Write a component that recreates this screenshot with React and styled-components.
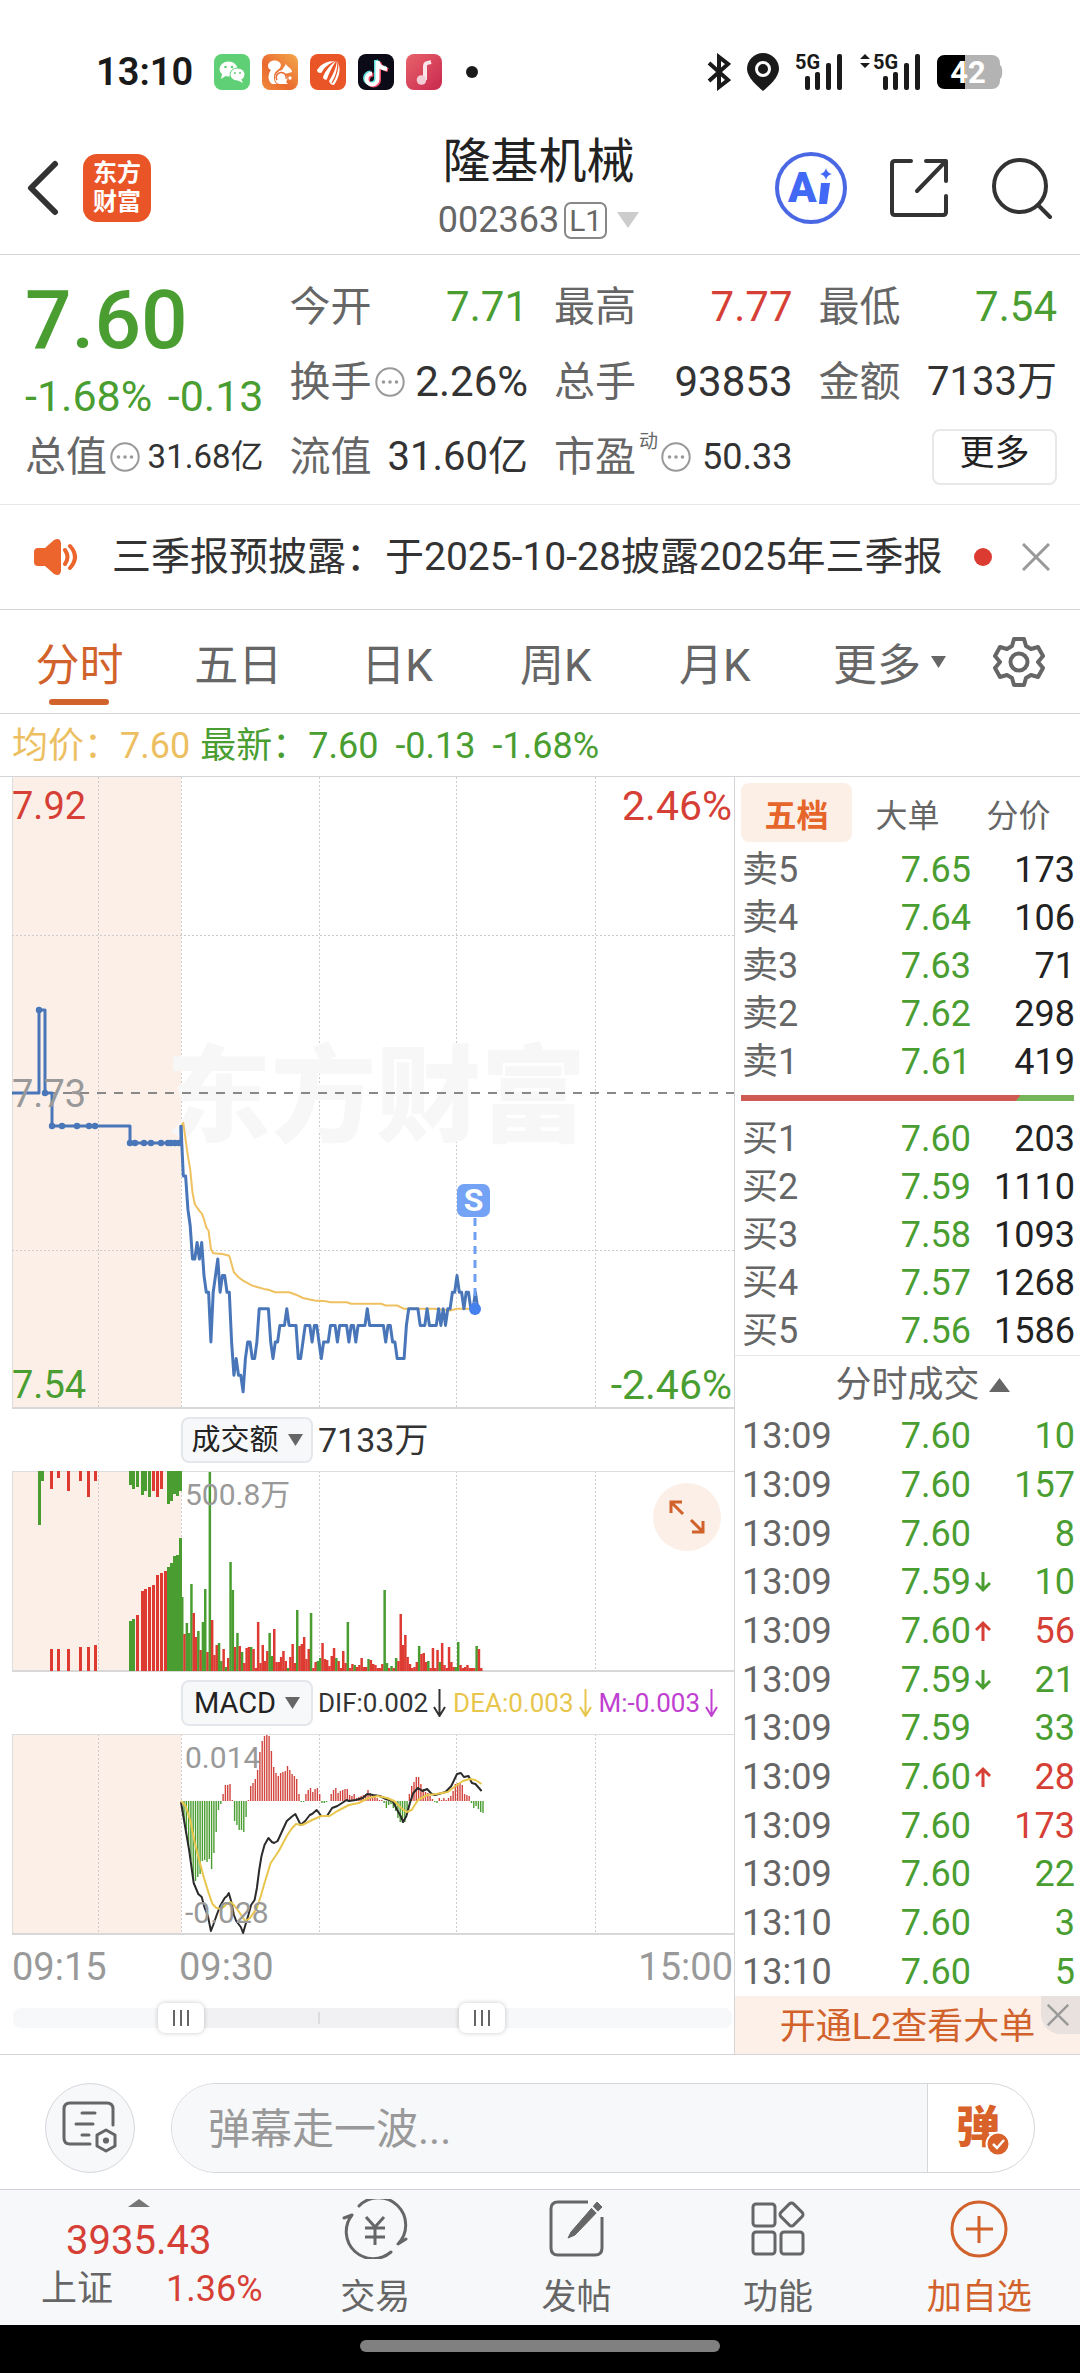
import React, { useState } from 'react'
import styled, { createGlobalStyle } from 'styled-components'

const GREEN = '#4a9e31';
const RED = '#d63f36';
const ORANGE = '#d2622b';
const LINE = '#d3d4d7';

const GlobalStyle = createGlobalStyle`
  * {
    box-sizing: border-box;
  }
  body {
    margin: 0;
    background: #fff;
    color: #333;
    font-family: Roboto, "Noto Sans CJK SC", sans-serif;
  }
  button, input {
    font-family: inherit;
    color: inherit;
    margin: 0;
  }
  svg {
    display: block;
    flex: none;
  }
`;

const Page = styled.div`
  width: 100%;
  overflow: hidden;
`;

const PlainButton = styled.button`
  border: none;
  background: none;
  padding: 0;
  display: flex;
  align-items: center;
  justify-content: center;
  cursor: pointer;
`;

/* status bar */

const StatusBar = styled.div`
  height: 96px;
  padding: 48px 77px 0 96px;
  display: flex;
  align-items: center;
  justify-content: space-between;
`;

const StatusGroup = styled.div`
  display: flex;
  align-items: center;
  gap: ${props => props.$gap}px;
`;

const Clock = styled.time`
  width: 106px;
  font-size: 38px;
  line-height: 40px;
  font-weight: 600;
  color: #1a1a1a;
`;

/* header */

const Header = styled.header`
  height: 159px;
  padding: 0 27px 0 24px;
  border-bottom: 1px solid ${LINE};
  display: grid;
  grid-template-columns: 1fr auto 1fr;
  align-items: center;
`;

const HeaderSide = styled.div`
  display: flex;
  align-items: center;
  justify-content: ${props => props.$end ? 'flex-end' : 'flex-start'};
  gap: ${props => props.$gap}px;
  padding-top: 26px;
`;

const Logo = styled.div`
  width: 68px;
  height: 68px;
  border-radius: 14px;
  background: #ea5527;
  color: #fff;
  font-size: 24px;
  line-height: 29px;
  font-weight: 700;
  text-align: center;
  padding: 5px 8px;
`;

const TitleBlock = styled.div`
  display: flex;
  flex-direction: column;
  align-items: center;
  padding-top: 28px;
`;

const Title = styled.h1`
  margin: 0;
  font-size: 48px;
  line-height: 62px;
  font-weight: 400;
  color: #222;
`;

const Code = styled.button`
  border: none;
  background: none;
  padding: 0;
  display: flex;
  align-items: center;
  gap: 5px;
  font-size: 36px;
  line-height: 54px;
  color: #666;
`;

const Level = styled.span`
  border: 2px solid #888;
  border-radius: 7px;
  padding: 0 3px;
  font-size: 30px;
  line-height: 33px;
  margin-right: 5px;
`;

/* quote */

const Quote = styled.section`
  display: grid;
  grid-template-columns: repeat(4, minmax(0, 1fr));
  grid-auto-rows: 75px;
  column-gap: 26px;
  padding: 14px 23px 10px 25px;
  border-bottom: 1px solid #e6e7ea;
`;

const BigPrice = styled.div`
  font-size: 82px;
  line-height: 102px;
  font-weight: 500;
  color: ${GREEN};
`;

const PriceBlock = styled.div`
  grid-row: span 2;
  display: flex;
  flex-direction: column;
`;

const PriceChange = styled.div`
  display: flex;
  justify-content: space-between;
  font-size: 43px;
  line-height: 50px;
  color: ${GREEN};
`;

const Stat = styled.div`
  display: flex;
  align-items: center;
  justify-content: space-between;
  white-space: nowrap;
`;

const StatLabel = styled.span`
  display: flex;
  align-items: center;
  gap: 3px;
  font-size: 41px;
  line-height: 50px;
  color: #666;
`;

const Sup = styled.sup`
  font-size: 19px;
  line-height: 20px;
  align-self: flex-start;
`;

const StatValue = styled.span`
  font-size: ${props => props.$size || 42}px;
  line-height: 50px;
  color: ${props => props.$color || '#333'};
`;

const MoreButton = styled.button`
  justify-self: end;
  align-self: center;
  width: 125px;
  height: 56px;
  border: 2px solid #e6e8ea;
  border-radius: 8px;
  background: #fff;
  padding: 0 0 5px;
  font-size: 35px;
  line-height: 46px;
  color: #222;
`;

/* notice */

const Notice = styled.section`
  height: 105px;
  padding: 0 30px 0 34px;
  display: flex;
  align-items: center;
  border-bottom: 1px solid ${LINE};
`;

const NoticeText = styled.a`
  flex: 1;
  margin-left: 34px;
  font-size: 39px;
  line-height: 50px;
  color: #333;
  text-decoration: none;
  white-space: nowrap;
`;

const Dot = styled.span`
  width: 18px;
  height: 18px;
  border-radius: 50%;
  background: #dc3b31;
  margin-right: 30px;
`;

/* tabs */

const PeriodTabs = styled.nav`
  height: 104px;
  display: grid;
  grid-template-columns: repeat(5, 5fr) 6fr 3fr;
  border-bottom: 1px solid ${LINE};
`;

const PeriodTab = styled.button`
  position: relative;
  border: none;
  background: none;
  padding: 0;
  display: flex;
  align-items: center;
  justify-content: center;
  gap: 10px;
  font-size: 44px;
  color: ${props => props.$active ? ORANGE : '#666'};

  &::after {
    content: '';
    display: ${props => props.$active ? 'block' : 'none'};
    position: absolute;
    bottom: 8px;
    width: 60px;
    height: 6px;
    border-radius: 3px;
    background: ${ORANGE};
  }
`;

const SettingsButton = styled(PlainButton)`
  justify-content: flex-start;
  padding-left: 8px;
`;

const InfoRow = styled.div`
  height: 63px;
  padding: 2px 12px 0;
  display: flex;
  align-items: center;
  font-size: 36px;
  line-height: 50px;
  border-bottom: 1px solid ${LINE};
  color: ${GREEN};
  white-space: nowrap;
`;

const InfoItem = styled.span`
  margin-right: ${props => props.$gap || 0}px;
  color: ${props => props.$color || GREEN};
`;

/* body */

const Body = styled.main`
  display: grid;
  grid-template-columns: minmax(0, 1fr) 346px;
  border-bottom: 1px solid ${LINE};
`;

const Charts = styled.div`
  padding-left: 12px;
  display: flex;
  flex-direction: column;
`;

const ChartBox = styled.div`
  position: relative;

  > svg {
    width: 100%;
    height: auto;
  }
`;

const corners = {
  tl: 'top: 7px; left: 0;',
  tr: 'top: 7px; right: 2px;',
  ml: 'top: 295px; left: 0;',
  bl: 'bottom: 2px; left: 0;',
  br: 'bottom: 2px; right: 2px;',
  open: 'top: 2px; left: 173px;',
  openLow: 'bottom: 0; left: 173px;',
};

const AxisLabel = styled.span`
  position: absolute;
  ${props => corners[props.$at]}
  font-size: ${props => props.$size || 38}px;
  line-height: 44px;
  color: ${props => props.$color || '#999'};
`;

const ExpandButton = styled(PlainButton)`
  position: absolute;
  top: 12px;
  right: 13px;
  width: 68px;
  height: 68px;
  border-radius: 50%;
  background: #fcefe7;
`;

const IndicatorBar = styled.div`
  height: 62px;
  padding-left: 169px;
  display: flex;
  align-items: center;
  gap: 5px;
  white-space: nowrap;
`;

const IndicatorButton = styled.button`
  width: 132px;
  height: 46px;
  border: 2px solid #e3e7eb;
  border-radius: 8px;
  background: #f7f8fa;
  padding: 0;
  display: flex;
  align-items: center;
  justify-content: center;
  gap: 9px;
  font-size: 29px;
  line-height: 40px;
  color: #222;
`;

const IndicatorValue = styled.span`
  font-size: 34px;
  line-height: 44px;
  color: #333;
`;

const MacdValue = styled.span`
  display: flex;
  align-items: center;
  gap: 5px;
  margin-right: 2px;
  font-size: 26px;
  line-height: 44px;
  color: ${props => props.$color};
`;

const TimeAxis = styled.div`
  height: 60px;
  padding: 3px 1px 0 0;
  display: grid;
  grid-template-columns: 167px 1fr auto;
  align-items: center;
  font-size: 38px;
  line-height: 44px;
  color: #999;
`;

const RangeSlider = styled.div`
  position: relative;
  height: 30px;
  margin: 8px 2px 21px 1px;
`;

const RangeTrack = styled.div`
  position: absolute;
  top: 5px;
  left: 0;
  right: 0;
  height: 20px;
  border-radius: 8px;
  background: #f7f8fa;
  overflow: hidden;
`;

const RangeFill = styled.div`
  position: absolute;
  top: 0;
  bottom: 0;
  background: linear-gradient(#ddd, #ddd) 47% 50% / 2px 12px no-repeat #f1f1f3;
`;

const RangeInput = styled.input`
  position: absolute;
  inset: 0;
  width: 100%;
  height: 30px;
  background: none;
  appearance: none;
  pointer-events: none;

  &::-webkit-slider-thumb {
    appearance: none;
    pointer-events: auto;
    width: 46px;
    height: 30px;
    border-radius: 7px;
    background:
      linear-gradient(#666, #666) 15px 50% / 2px 16px no-repeat,
      linear-gradient(#666, #666) 22px 50% / 2px 16px no-repeat,
      linear-gradient(#666, #666) 29px 50% / 2px 16px no-repeat,
      #fff;
    box-shadow: 0 0 5px rgba(0, 0, 0, 0.22);
  }
`;

/* order book */

const Book = styled.aside`
  border-left: 1px solid ${LINE};
  display: flex;
  flex-direction: column;
`;

const BookTabs = styled.div`
  display: grid;
  grid-template-columns: repeat(3, 1fr);
  padding: 6px 6px 4px;
`;

const BookTab = styled.button`
  height: 59px;
  border: none;
  border-radius: 8px;
  padding: 0;
  background: ${props => props.$active ? '#fcefe6' : 'none'};
  color: ${props => props.$active ? '#e5652b' : '#666'};
  font-weight: ${props => props.$active ? 700 : 400};
  font-size: 32px;
`;

const Table = styled.table`
  width: 100%;
  height: ${props => props.$height}px;
  border-collapse: collapse;
  table-layout: fixed;
  font-size: 36px;
  line-height: 40px;
`;

const Cell = styled.td`
  padding: 0;
  text-align: ${props => props.$align || 'left'};
  color: ${props => props.$color || '#222'};
  white-space: nowrap;

  &:first-child {
    padding-left: 7px;
    width: 112px;
  }
  &:nth-child(2) {
    width: 124px;
  }
  &:last-child {
    padding-right: 5px;
  }
`;

const TickArrow = styled.span`
  position: absolute;
  margin: 8px 0 0 4px;
`;

const RatioBar = styled.div`
  height: 6px;
  margin: 9px 6px 14px;
  display: flex;
  background: #76b65b;
`;

const RatioFill = styled.div`
  background: #cf5a52;
  clip-path: polygon(0 0, 100% 0, calc(100% - 5px) 100%, 0 100%);
`;

const TicksHeader = styled.button`
  height: 57px;
  border: none;
  border-top: 1px solid #e6e7ea;
  background: none;
  padding: 2px 0 0 30px;
  display: flex;
  align-items: center;
  justify-content: center;
  gap: 9px;
  font-size: 36px;
  line-height: 46px;
  color: #666;
`;

const Promo = styled.div`
  position: relative;
  flex: 1;
  padding-top: 3px;
  background: #fcf0e8;
  display: flex;
  align-items: center;
  justify-content: center;
`;

const PromoLink = styled.a`
  font-size: 36px;
  line-height: 46px;
  color: ${ORANGE};
  text-decoration: none;
`;

const PromoClose = styled(PlainButton)`
  position: absolute;
  top: 0;
  right: 0;
  width: 39px;
  height: 38px;
  padding-right: 6px;
  border-bottom-left-radius: 20px;
  background: #e9e1dd;
`;

/* comment bar */

const CommentBar = styled.form`
  height: 134px;
  padding: 16px 45px 4px;
  display: flex;
  align-items: center;
  gap: 36px;
`;

const RoundButton = styled(PlainButton)`
  width: 90px;
  height: 90px;
  border: 1px solid #d5d7db;
  border-radius: 50%;
  background: #f7f8fa;
`;

const CommentField = styled.div`
  flex: 1;
  height: 90px;
  display: flex;
  border: 1px solid #d5d7db;
  border-radius: 45px;
  overflow: hidden;
`;

const CommentInput = styled.input`
  flex: 1;
  min-width: 0;
  border: none;
  outline: none;
  padding: 3px 36px 0;
  background: #f7f8fa;
  font-size: 42px;

  &::placeholder {
    color: #999;
    opacity: 1;
  }
`;

const DanmakuButton = styled(PlainButton)`
  width: 107px;
  border-left: 1px solid #d5d7db;
  padding-right: 6px;
`;

const DanmakuGlyph = styled.span`
  position: relative;
  font-size: 44px;
  line-height: 50px;
  font-weight: 900;
  color: #d9612a;

  svg {
    position: absolute;
    right: -11px;
    bottom: -4px;
  }
`;

/* bottom bar */

const BottomBar = styled.nav`
  height: 136px;
  background: #f7f8fa;
  border-top: 1px solid #d0d2d6;
  display: grid;
  grid-template-columns: 274fr repeat(4, 201fr);
`;

const IndexBlock = styled.button`
  border: none;
  background: none;
  padding: 9px 12px 0 41px;
  display: flex;
  flex-direction: column;
  align-items: stretch;
  color: ${RED};
  font-size: 40px;
  line-height: 49px;
`;

const IndexValue = styled.span`
  display: flex;
  flex-direction: column;
  align-items: center;
  gap: 9px;
  margin-right: 26px;
`;

const IndexMeta = styled.span`
  display: flex;
  justify-content: space-between;
  font-size: 36px;
`;

const IndexName = styled.span`
  color: #666;
`;

const NavButton = styled.button`
  border: none;
  background: none;
  padding: 9px 0 0;
  display: flex;
  flex-direction: column;
  align-items: center;
  gap: 14px;
  font-size: 35px;
  line-height: 50px;
  color: ${props => props.$accent ? ORANGE : '#666'};
`;

const HomeArea = styled.div`
  height: 48px;
  background: #000;
  display: flex;
  justify-content: center;
  align-items: center;
  padding-bottom: 6px;
`;

const HomeIndicator = styled.div`
  width: 33.3%;
  height: 12px;
  border-radius: 6px;
  background: #808080;
`;

/* data */

const PERIODS = ['分时', '五日', '日K', '周K', '月K'];

const ASKS = [
  ['卖5', '7.65', 173],
  ['卖4', '7.64', 106],
  ['卖3', '7.63', 71],
  ['卖2', '7.62', 298],
  ['卖1', '7.61', 419],
];

const BIDS = [
  ['买1', '7.60', 203],
  ['买2', '7.59', 1110],
  ['买3', '7.58', 1093],
  ['买4', '7.57', 1268],
  ['买5', '7.56', 1586],
];

const TICKS = [
  ['13:09', '7.60', '', 10, GREEN],
  ['13:09', '7.60', '', 157, GREEN],
  ['13:09', '7.60', '', 8, GREEN],
  ['13:09', '7.59', 'down', 10, GREEN],
  ['13:09', '7.60', 'up', 56, RED],
  ['13:09', '7.59', 'down', 21, GREEN],
  ['13:09', '7.59', '', 33, GREEN],
  ['13:09', '7.60', 'up', 28, RED],
  ['13:09', '7.60', '', 173, RED],
  ['13:09', '7.60', '', 22, GREEN],
  ['13:10', '7.60', '', 3, GREEN],
  ['13:10', '7.60', '', 5, GREEN],
];

// minute prices, in cents below the previous close
const PRICES = [
  2, 5, 5, 7, 8, 10, 10, 9, 10, 9, 11, 12, 12, 15, 12, 11, 10, 12, 11, 11,
  12, 12, 15, 17, 16, 17, 17, 18, 16, 15, 15, 16, 16, 15, 13, 13, 13, 13, 13, 15,
  16, 15, 15, 14, 14, 14, 13, 14, 14, 14, 14, 16, 16, 15, 14, 14, 14, 15, 14, 14,
  15, 16, 15, 15, 15, 14, 14, 14, 15, 14, 14, 14, 14, 15, 14, 14, 15, 14, 14, 14,
  14, 13, 14, 14, 14, 14, 14, 14, 14, 15, 14, 14, 15, 15, 16, 16, 16, 16, 14, 13,
  13, 13, 13, 13, 14, 14, 14, 13, 14, 14, 14, 14, 13, 14, 13, 14, 13, 13, 12, 12,
  11, 12, 12, 13, 12, 12, 13, 13, 12, 13, 13,
];

// [minute, cents below the previous close]
const AVERAGE = [
  [0, 2], [1, 1.8], [3, 3.8], [4, 4.6], [5, 6], [6, 6.7], [8, 7.1], [9, 7.25], [10, 7.6],
  [11, 8.1], [12, 8.3], [13, 9.4], [14, 9.65], [18, 9.7], [21, 9.8], [22, 10.3], [23, 10.8],
  [25, 11.1], [27, 11.3], [31, 11.6], [36, 11.8], [38, 11.85], [41, 12], [47, 12], [50, 12.15],
  [53, 12.35], [58, 12.5], [63, 12.55], [65, 12.6], [72, 12.6], [74, 12.7], [87, 12.7],
  [89, 12.8], [94, 12.8], [97, 13], [110, 13], [117, 13.1], [120, 13], [127, 13],
];

const AUCTION_DOTS = [
  [27, 233], [33, 316], [40, 349], [50, 349], [65, 349], [77, 349], [83, 349],
  [118, 366], [123, 366], [132, 366], [139, 366], [149, 366], [156, 366], [159, 366], [163, 366], [167, 366],
];

// positive bars are red, negative ones green
const VOLUMES = [
  -74, 37, -48, -38, -87, 58, 34, -40, 21, -49, -82, 19, -199, 51, 16, 26, -28, -10, 22, -4,
  13, -109, -81, 24, -38, 25, -19, 8, 23, 24, -24, 22, 3, 49, 8, 26, 10, 20, -38, -15,
  42, 9, 9, 14, 20, 10, -3, 14, 27, 8, -61, 25, 27, 34, 12, 22, -58, 3, 9, -10,
  -13, 28, 12, 11, 5, 15, 23, -13, 10, 3, 20, 8, -49, 3, 7, -6, 4, 6, 13, 4,
  4, -12, 11, 7, 6, 3, 3, 7, -81, -8, 3, -5, 3, -13, 10, 57, 26, 36, 14, 7,
  3, 4, 9, -25, 17, 18, 9, -10, 3, 23, 3, 21, -9, 28, 6, 3, 24, 9, 4, -4,
  -29, 6, 3, 4, 6, 3, 3, 3, -25, 22, 3,
];

// [x, height] of the call auction, matched and unmatched
const AUCTION_MATCHED = [
  [39, 22], [46, 22], [56, 22], [68, 24], [76, 24], [83, 26],
  [118, -50], [121, -52], [125, 56], [130, 80], [133, 82], [137, 84], [141, 86], [145, 96], [149, 98],
  [153, 100], [156, -104], [159, -108], [162, -115], [165, -116], [168, -133],
];
const AUCTION_UNMATCHED = [
  [27, -54], [30, -10], [39, 18], [46, 7], [56, 20], [68, 10], [76, 26], [83, 10],
  [118, -14], [121, -18], [125, -16], [130, -24], [133, -20], [137, -26], [141, 20], [145, 26], [149, 18],
  [156, -33], [159, -30], [162, -23], [165, -25], [168, -20],
];

const MACD = [
  0, -19, -29, -45, -59, -78, -80, -76, -73, -60, -59, -61, -58, -68, -52, -31, -9, -3, 7, 16,
  16, 17, 1, -20, -24, -29, -29, -31, -16, 1, 15, 18, 22, 31, 49, 60, 65, 66, 65, 50,
  34, 28, 25, 28, 29, 30, 35, 31, 27, 25, 22, 7, -1, -1, 7, 11, 13, 9, 12, 13,
  7, -2, -2, -1, 0, 7, 11, 13, 8, 10, 11, 12, 12, 6, 5, 7, 3, 4, 5, 6,
  7, 11, 8, 5, 5, 3, 1, 1, -2, -7, -4, -3, -7, -10, -17, -21, -22, -21, -12, 7,
  15, 19, 24, 24, 17, 12, 9, 8, 5, 2, -1, -2, 3, 1, 3, 1, 3, 5, 10, 17,
  18, 18, 16, 7, 6, 5, -2, -7, -5, -8, -11, -12,
];

const DIF = [
  [0, 68], [1, 82], [3.5, 116], [5.5, 149], [7.5, 160], [9, 163], [10.3, 174], [11.7, 182], [13, 197],
  [14, 191], [15.5, 181], [17, 172], [19, 164], [20, 162], [20.8, 159], [21.8, 167], [23, 181], [24, 187],
  [25, 190], [26, 193], [27, 199], [28, 191], [29.3, 181], [30.5, 171], [32, 166], [33, 154], [34, 136],
  [35, 122], [36.3, 111], [38, 104], [39.5, 108], [40.5, 109], [42, 107], [44, 97], [46, 87], [48, 83],
  [49.7, 80], [51, 86], [52, 91], [54, 87], [56, 81], [57, 80], [59, 76], [61, 82], [63.5, 82], [65.7, 74],
  [68, 72], [72, 66], [73, 67], [76, 66], [79, 64], [81, 60], [83.5, 61], [86.5, 62], [89, 65], [92, 67],
  [94, 76], [95.5, 82], [96.6, 88], [98, 82], [99.5, 69], [101, 59], [103, 54], [105, 57], [107, 55],
  [109, 60], [110.5, 61], [115, 58], [117.5, 52], [120, 40], [121.7, 39], [123, 43], [125, 42],
  [126.5, 49], [128, 50], [130.7, 57],
];

const DEA = [
  [0, 67], [2, 72], [4, 86], [6, 109], [8, 127], [10, 144], [12, 159], [13.7, 170], [15.4, 174],
  [17.4, 175], [19.5, 171], [21.5, 168], [23, 171], [25, 177], [27, 184], [28, 187], [30, 184], [33, 174],
  [34.7, 162], [36.3, 149], [39, 129], [42.5, 117], [46, 102], [48, 95], [50, 90], [52.7, 91], [57, 86],
  [61, 82], [64.6, 82], [68, 77], [73, 71], [77.3, 69], [81.4, 64], [85.5, 62], [89.6, 64], [92.7, 67],
  [95.8, 74], [98, 78], [100.3, 76], [103, 66], [107, 61], [111, 60], [116, 58], [119.4, 52],
  [122.5, 47], [125.5, 45], [128, 46], [130.7, 50],
];

const OPEN_X = 169;
const MINUTE = 2.3;
const minuteX = i => OPEN_X + i * MINUTE;
const priceY = cents => 316 + cents * 16.6;
const toPoints = list => list.map(([x, y]) => `${x.toFixed(1)},${y.toFixed(1)}`).join(' ');

/* icons */

const Triangle = ({ up, width, height, color }) => (
  <svg width={width} height={height} viewBox="0 0 10 10" preserveAspectRatio="none">
    <path d={up ? 'M0 10H10L5 0Z' : 'M0 0H10L5 10Z'} fill={color} />
  </svg>
);

const MoreDots = () => (
  <svg width="30" height="30" viewBox="0 0 30 30" fill="#999">
    <circle cx="15" cy="15" r="13.7" fill="none" stroke="#999" strokeWidth="2" />
    <circle cx="8.5" cy="15" r="1.8" />
    <circle cx="15" cy="15" r="1.8" />
    <circle cx="21.5" cy="15" r="1.8" />
  </svg>
);

const Close = ({ size, color = '#999', width = 3 }) => (
  <svg width={size} height={size} viewBox="0 0 28 28" stroke={color} strokeWidth={width}>
    <path d="M1 1L27 27M27 1L1 27" />
  </svg>
);

const Arrow = ({ up, color, width = 16, height = 24, stroke = 3 }) => (
  <svg width={width} height={height} viewBox="0 0 16 24" fill="none" stroke={color} strokeWidth={stroke}>
    <path d={up ? 'M8 22V5M1 11L8 4L15 11' : 'M8 2V19M1 13L8 20L15 13'} />
  </svg>
);

const LongArrow = ({ color }) => (
  <svg width="13" height="28" viewBox="0 0 13 28" fill="none" stroke={color} strokeWidth="2">
    <path d="M6.5 0V26M1 18L6.500 27L12 18" />
  </svg>
);

const AppIcons = () => (
  <svg width="266" height="38" viewBox="0 0 266 38">
    <defs>
      <linearGradient id="squirrel" x1="1" y1="0" x2="0" y2="1">
        <stop offset="0" stopColor="#f3a84c" />
        <stop offset="0.6" stopColor="#ea6a2f" />
        <stop offset="1" stopColor="#f08a3c" />
      </linearGradient>
      <linearGradient id="music" x1="0" y1="0" x2="1" y2="1">
        <stop offset="0" stopColor="#e8636a" />
        <stop offset="1" stopColor="#c9274f" />
      </linearGradient>
    </defs>
    <rect x="0" y="1" width="36" height="36" rx="8" fill="#5fd075" />
    <ellipse cx="14.500" cy="16" rx="9" ry="7.500" fill="#fff" />
    <path d="M8 21L7 26L13 22Z" fill="#fff" />
    <ellipse cx="23.500" cy="21.500" rx="7.500" ry="6.500" fill="#fff" stroke="#5fd075" strokeWidth="1" />
    <path d="M27 26L29 30L23 27Z" fill="#fff" />
    <g fill="#5fd075">
      <circle cx="11.500" cy="14" r="1.300" />
      <circle cx="18" cy="14" r="1.300" />
      <circle cx="21" cy="20" r="1" />
      <circle cx="26" cy="20" r="1" />
    </g>
    <rect x="48" y="1" width="36" height="36" rx="8" fill="url(#squirrel)" />
    <path d="M54 13C54 8 61 6 65 9C68 11 67 14 65 16C62 18 60 20 60 24C60 28 61 30 63 31H58C53 27 54 21 57 17C55 16 54 15 54 13Z" fill="#fff" />
    <path d="M72 11L68 17C64 18 61 21 61 25C61 29 63 31 67 31H74L72 29C74 27 74 23 71 21L78 19C78 15 73 14 72 11Z" fill="#fff" />
    <path d="M63 27A5 5 0 1 1 72 26" fill="none" stroke="#ea6a2f" strokeWidth="1.500" />
    <circle cx="76" cy="25" r="1.700" fill="#fff" />
    <rect x="96" y="1" width="36" height="36" rx="8" fill="#ea5527" />
    <g fill="#fff">
      <path d="M103 17C107 11 113 8 121 8C114 11 110 15 108 19C107 21 103 20 103 17Z" />
      <path d="M109 24C112 17 116 12 122 8C118 14 115 20 113 26C112 28 109 26 109 24Z" />
      <path d="M115 28C119 22 122 15 123 8C128 15 125 25 120 32C118 32 116 31 115 28Z" />
    </g>
    <path d="M124 9C124 17 122 24 118 30" fill="none" stroke="#ea5527" strokeWidth="1.200" />
    <rect x="144" y="1" width="36" height="36" rx="8" fill="#0b0b17" />
    <g fill="none" strokeWidth="4">
      <path d="M162 7V25A5.500 5.500 0 1 1 156.500 19.500M162 7C163 12 167 15 172 15" stroke="#5fe0e0" />
      <path d="M165 9V27A5.500 5.500 0 1 1 159.500 21.500M165 9C166 14 170 16 174 17" stroke="#ec5068" />
      <path d="M163.500 8V26A5.500 5.500 0 1 1 158 20.500M163.500 8C164 13 168 15.500 173 16" stroke="#fff" />
    </g>
    <rect x="192" y="1" width="36" height="36" rx="8" fill="url(#music)" />
    <path d="M211 27V13C211 10 213 10 217 9" fill="none" stroke="#f9e6ea" strokeWidth="4" />
    <circle cx="207.500" cy="27" r="4.800" fill="#f3cdd5" />
    <circle cx="258" cy="19" r="6" fill="#1a1a1a" />
  </svg>
);

const Bluetooth = () => (
  <svg width="24" height="38" viewBox="0 0 24 38" fill="none" stroke="#1a1a1a" strokeWidth="4">
    <path d="M2 10L21 27L12 34V4L21 11L2 28" />
  </svg>
);

const Pin = () => (
  <svg width="32" height="38" viewBox="0 0 32 38">
    <path d="M16 0A16 16 0 0 0 0 16C0 24 10 33 16 38C22 33 32 24 32 16A16 16 0 0 0 16 0Z" fill="#1a1a1a" />
    <circle cx="16" cy="16" r="6.500" fill="#1a1a1a" stroke="#fff" strokeWidth="3" />
  </svg>
);

const Signal = ({ active }) => (
  <svg width={active ? 62 : 48} height="48" viewBox={active ? '-14 -5 62 48' : '0 -5 48 48'} fill="#1a1a1a">
    {active && <path d="M-13 6L-8 1L-3 6ZM-13 10H-3L-8 15Z" />}
    <text x="0" y="16" fontSize="20" fontWeight="700">5G</text>
    <rect x="10" y="23" width="5" height="14" rx="2" />
    <rect x="20" y="19" width="5" height="18" rx="2" />
    <rect x="31" y="10" width="5" height="27" rx="2" />
    <rect x="42" y="1" width="5" height="36" rx="2" />
  </svg>
);

const Battery = () => (
  <svg width="66" height="36" viewBox="0 0 66 36">
    <rect x="0" y="1" width="63" height="34" rx="8" fill="#b3b3b3" />
    <path d="M63 11C66 12 66 24 63 25Z" fill="#b3b3b3" />
    <path d="M8 1H28V35H8C3 35 0 32 0 27V9C0 4 3 1 8 1Z" fill="#000" />
    <text x="31" y="29" textAnchor="middle" fontSize="31" fontWeight="700" fill="#fff">42</text>
  </svg>
);

const AiIcon = () => (
  <svg width="72" height="72" viewBox="0 0 72 72">
    <circle cx="36" cy="36" r="34" fill="none" stroke="#4a68e4" strokeWidth="4" />
    <text x="13" y="50" fontSize="42" fontWeight="900" fill="#4169f5">A</text>
    <path d="M46 31H55L52 52H44Z" fill="#4169f5" />
    <path d="M51 16Q52 21 57 22Q52 23 51 28Q50 23 45 22Q50 21 51 16Z" fill="#4169f5" />
  </svg>
);

const ShareIcon = () => (
  <svg width="60" height="60" viewBox="0 0 60 60" fill="none" stroke="#333" strokeWidth="4" strokeLinecap="round" strokeLinejoin="round">
    <path d="M22 3H6Q3 3 3 6V54Q3 57 6 57H54Q57 57 57 54V38" />
    <path d="M37 3H57V23M56 4L28 33" />
  </svg>
);

const SearchIcon = () => (
  <svg width="62" height="62" viewBox="0 0 62 62" fill="none" stroke="#333" strokeWidth="4" strokeLinecap="round">
    <circle cx="29" cy="29" r="26" />
    <path d="M47 48L59 60" />
  </svg>
);

const Speaker = () => (
  <svg width="44" height="36" viewBox="0 0 44 36">
    <path d="M0 13Q0 9 4 9H11L20 1Q26 -2 27 4V32Q26 38 20 35L11 27H4Q0 27 0 23Z" fill="#ec652d" />
    <path d="M31 11Q36 18 31 25M36 7Q46 18 36 29" fill="none" stroke="#ec652d" strokeWidth="4" strokeLinecap="round" />
  </svg>
);

const Gear = () => (
  <svg width="52" height="52" viewBox="0 0 52 52" fill="none" stroke="#666" strokeWidth="4" strokeLinejoin="round">
    <path d="M21 3H31L33 10L38 13L45 11L50 20L45 26L50 32L45 41L38 39L33 42L31 49H21L19 42L14 39L7 41L2 32L7 26L2 20L7 11L14 13L19 10Z" />
    <circle cx="26" cy="26" r="8.500" />
  </svg>
);

const Expand = () => (
  <svg width="36" height="34" viewBox="0 0 36 34" fill="none" stroke={ORANGE} strokeWidth="3">
    <path d="M2 13V2H13M2 2L14 14M34 21V32H23M34 32L22 20" />
  </svg>
);

const DanmakuSettings = () => (
  <svg width="56" height="54" viewBox="0 0 56 54" fill="none" stroke="#666" strokeWidth="3" strokeLinecap="round">
    <path d="M28 43H8Q2 43 2 37V8Q2 2 8 2H45Q51 2 51 8V24" />
    <path d="M20 12H33M14 23H31M20 34H27" />
    <path d="M44 29L53 34V45L44 50L35 45V34Z" strokeLinejoin="round" />
    <circle cx="44" cy="39.500" r="1.600" fill="#666" />
  </svg>
);

const CheckBadge = () => (
  <svg width="26" height="26" viewBox="0 0 26 26">
    <circle cx="13" cy="13" r="11.500" fill="#d9612a" stroke="#fff" strokeWidth="2" />
    <path d="M8 13L12 17L19 9" fill="none" stroke="#fff" strokeWidth="2.500" />
  </svg>
);

const TradeIcon = () => (
  <svg width="66" height="60" viewBox="0 0 66 60" fill="none" stroke="#666" strokeWidth="3" strokeLinecap="round" strokeLinejoin="round">
    <path d="M17 7A27 27 0 0 1 56 45L64 40" />
    <path d="M49 53A27 27 0 0 1 10 16L2 19" />
    <path d="M24 18L33 28L42 18M23 29H43M23 38H43M33 28V46" strokeLinecap="butt" />
  </svg>
);

const PostIcon = () => (
  <svg width="56" height="60" viewBox="0 0 56 60" fill="none" stroke="#666" strokeWidth="3">
    <path d="M39 3H9Q2 3 2 10V49Q2 56 9 56H46Q53 56 53 49V18" />
    <path d="M48 3L53 8L26 36L19 39L22 33Z" fill="#666" strokeWidth="1" />
    <path d="M42 7L49 14" stroke="#f7f8fa" strokeWidth="2" />
  </svg>
);

const FunctionIcon = () => (
  <svg width="54" height="60" viewBox="0 0 54 60" fill="none" stroke="#666" strokeWidth="3">
    <rect x="2" y="5" width="22" height="22" rx="3" />
    <rect x="2" y="33" width="22" height="22" rx="3" />
    <rect x="30" y="33" width="22" height="22" rx="3" />
    <rect x="31.500" y="6.500" width="18" height="18" rx="3" transform="rotate(45 40.500 15.500)" />
  </svg>
);

const AddIcon = () => (
  <svg width="60" height="60" viewBox="0 0 60 60" fill="none" stroke={ORANGE} strokeWidth="3">
    <circle cx="30" cy="30" r="27" />
    <path d="M30 17V44M17 30H44" />
  </svg>
);

/* charts */

const Grid = ({ height }) => (
  <g>
    <rect x="0" y="0" width={OPEN_X} height={height} fill="#fcefe8" />
    <g stroke="#ccc" strokeWidth="1" strokeDasharray="2 2">
      {[86.5, 169.5, 307.5, 444.5, 583.5].map(x => (
        <line key={x} x1={x} x2={x} y1="0" y2={height} />
      ))}
    </g>
    <path d={`M0.500 0V${height}`} stroke="#ddd" />
    <path d={`M0 ${height - 1}H722`} stroke="#d8d8d8" strokeWidth="2" />
  </g>
);

const Bars = ({ data, base, width }) => data.map((value, i) => (
  <rect
    key={i}
    x={minuteX(i).toFixed(1)}
    y={base - Math.abs(value)}
    width={width}
    height={Math.abs(value)}
    fill={value > 0 ? '#dd3b32' : GREEN}
  />
));

function PriceChart() {
  const line = PRICES.map((cents, i) => [minuteX(i), priceY(cents)]);
  const average = AVERAGE.map(([i, cents]) => [minuteX(i), priceY(cents)]);

  return (
    <ChartBox>
      <svg viewBox="0 0 722 632">
        <Grid height={632} />
        <text x="154" y="356" fontSize="105" fontWeight="900" fill="#f7f7f7">东方财富</text>
        <path d="M0 158.500H722M0 473.500H722" stroke="#ccc" strokeDasharray="2 2" />
        <path d="M0 316H722" stroke="#888" strokeWidth="2" strokeDasharray="9 8" />
        <polyline points={toPoints(average)} fill="none" stroke="#efc160" strokeWidth="2" strokeLinejoin="round" />
        <g stroke="#4876b8" strokeWidth="3" fill="none" strokeLinejoin="round">
          <path d="M0 316H27V233H33V316H40V349H118V366H169V348" />
          <polyline points={toPoints(line)} />
        </g>
        {AUCTION_DOTS.map(([x, y]) => <circle key={`${x}-${y}`} cx={x} cy={y} r="3.2" fill="#4876b8" />)}
        <path d="M463 441V526" stroke="#6f9ff0" strokeWidth="3" strokeDasharray="8 6" />
        <circle cx="463" cy="532" r="6" fill="#4581ee" />
        <rect x="445" y="407" width="33" height="33" rx="7" fill="#74a2f5" />
        <text x="461.500" y="434" textAnchor="middle" fontSize="32" fontWeight="700" fill="#fff">S</text>
      </svg>
      <AxisLabel $at="tl" $color={RED}>7.92</AxisLabel>
      <AxisLabel $at="tr" $size={41} $color={RED}>2.46%</AxisLabel>
      <AxisLabel $at="ml">7.73</AxisLabel>
      <AxisLabel $at="bl" $color={GREEN}>7.54</AxisLabel>
      <AxisLabel $at="br" $size={41} $color={GREEN}>-2.46%</AxisLabel>
    </ChartBox>
  )
}

function VolumeChart() {
  return (
    <ChartBox>
      <svg viewBox="0 0 722 201">
        <Grid height={201} />
        <path d="M0 0.500H722" stroke="#ddd" />
        {AUCTION_MATCHED.map(([x, h]) => (
          <rect key={x} x={x - 1} y={200 - Math.abs(h)} width="3" height={Math.abs(h)} fill={h > 0 ? '#dd3b32' : GREEN} />
        ))}
        {AUCTION_UNMATCHED.map(([x, h]) => (
          <rect key={x} x={x - 1} y="0" width="3" height={Math.abs(h)} fill={h > 0 ? '#dd3b32' : GREEN} />
        ))}
        <Bars data={VOLUMES} base={200} width={2.5} />
      </svg>
      <AxisLabel $at="open" $size={30}>500.8万</AxisLabel>
      <ExpandButton type="button" aria-label="放大"><Expand /></ExpandButton>
    </ChartBox>
  )
}

function MacdChart() {
  return (
    <ChartBox>
      <svg viewBox="0 0 722 201">
        <Grid height={201} />
        <path d="M0 0.500H722" stroke="#ddd" />
        {MACD.map((value, i) => (
          <rect
            key={i}
            x={minuteX(i).toFixed(1)}
            y={value > 0 ? 67 - value : 67}
            width="1.400"
            height={Math.abs(value)}
            fill={value > 0 ? '#d2453e' : GREEN}
          />
        ))}
        <g fill="none" strokeWidth="2" strokeLinejoin="round">
          <polyline points={toPoints(DIF.map(([i, y]) => [minuteX(i), y]))} stroke="#2b2b2b" />
          <polyline points={toPoints(DEA.map(([i, y]) => [minuteX(i), y]))} stroke="#e8c64c" />
        </g>
      </svg>
      <AxisLabel $at="open" $size={30}>0.014</AxisLabel>
      <AxisLabel $at="openLow" $size={30}>-0.028</AxisLabel>
    </ChartBox>
  )
}

function TimeRange() {
  const [from, setFrom] = useState(215);
  const [to, setTo] = useState(662);

  return (
    <RangeSlider>
      <RangeTrack>
        <RangeFill style={{ left: `${from / 10}%`, right: `${100 - to / 10}%` }} />
      </RangeTrack>
      <RangeInput type="range" aria-label="开始时间" min="0" max="1000" value={from} onChange={e => setFrom(+e.target.value)} />
      <RangeInput type="range" aria-label="结束时间" min="0" max="1000" value={to} onChange={e => setTo(+e.target.value)} />
    </RangeSlider>
  )
}

const BookTable = ({ rows }) => (
  <Table $height={240}>
    <tbody>
      { rows.map(([name, price, volume]) => (
        <tr key={name}>
          <Cell $color="#666">{name}</Cell>
          <Cell $align="right" $color={GREEN}>{price}</Cell>
          <Cell $align="right">{volume}</Cell>
        </tr>
      ))}
    </tbody>
  </Table>
);

function App() {
  const [period, setPeriod] = useState('分时');
  const [comment, setComment] = useState('');

  return (
    <Page>
      <GlobalStyle />
      <StatusBar>
        <StatusGroup $gap={12}>
          <Clock>13:10</Clock>
          <AppIcons />
        </StatusGroup>
        <StatusGroup $gap={16}>
          <Bluetooth />
          <Pin />
          <Signal />
          <Signal active />
          <Battery />
        </StatusGroup>
      </StatusBar>

      <Header>
        <HeaderSide $gap={22}>
          <PlainButton type="button" aria-label="返回">
            <svg width="37" height="60" viewBox="0 0 37 60" fill="none" stroke="#333" strokeWidth="6" strokeLinecap="round" strokeLinejoin="round">
              <path d="M31 6L7 30L31 54" />
            </svg>
          </PlainButton>
          <Logo>东方<br />财富</Logo>
        </HeaderSide>
        <TitleBlock>
          <Title>隆基机械</Title>
          <Code type="button">
            002363
            <Level>L1</Level>
            <Triangle width={22} height={16} color="#ccc" />
          </Code>
        </TitleBlock>
        <HeaderSide $end $gap={42}>
          <PlainButton type="button" aria-label="智能助手"><AiIcon /></PlainButton>
          <PlainButton type="button" aria-label="分享"><ShareIcon /></PlainButton>
          <PlainButton type="button" aria-label="搜索"><SearchIcon /></PlainButton>
        </HeaderSide>
      </Header>

      <Quote>
        <PriceBlock>
          <BigPrice>7.60</BigPrice>
          <PriceChange><span>-1.68%</span><span>-0.13</span></PriceChange>
        </PriceBlock>
        <Stat><StatLabel>今开</StatLabel><StatValue $color={GREEN}>7.71</StatValue></Stat>
        <Stat><StatLabel>最高</StatLabel><StatValue $color={RED}>7.77</StatValue></Stat>
        <Stat><StatLabel>最低</StatLabel><StatValue $color={GREEN}>7.54</StatValue></Stat>
        <Stat><StatLabel>换手<MoreDots /></StatLabel><StatValue>2.26%</StatValue></Stat>
        <Stat><StatLabel>总手</StatLabel><StatValue>93853</StatValue></Stat>
        <Stat><StatLabel>金额</StatLabel><StatValue $size={40}>7133万</StatValue></Stat>
        <Stat><StatLabel>总值<MoreDots /></StatLabel><StatValue $size={33}>31.68亿</StatValue></Stat>
        <Stat><StatLabel>流值</StatLabel><StatValue $size={40}>31.60亿</StatValue></Stat>
        <Stat><StatLabel>市盈<Sup>动</Sup><MoreDots /></StatLabel><StatValue $size={36}>50.33</StatValue></Stat>
        <MoreButton type="button">更多</MoreButton>
      </Quote>

      <Notice>
        <Speaker />
        <NoticeText href="#notice">三季报预披露：于2025-10-28披露2025年三季报</NoticeText>
        <Dot />
        <PlainButton type="button" aria-label="关闭公告"><Close size={28} /></PlainButton>
      </Notice>

      <PeriodTabs>
        { PERIODS.map(name => (
          <PeriodTab key={name} type="button" $active={name === period} onClick={() => setPeriod(name)}>
            {name}
          </PeriodTab>
        ))}
        <PeriodTab type="button">
          更多
          <Triangle width={15} height={12} color="#666" />
        </PeriodTab>
        <SettingsButton type="button" aria-label="设置"><Gear /></SettingsButton>
      </PeriodTabs>

      <InfoRow>
        <InfoItem $color="#ecc062" $gap={10}>均价：7.60</InfoItem>
        <InfoItem $gap={17}>最新：7.60</InfoItem>
        <InfoItem $gap={17}>-0.13</InfoItem>
        <InfoItem>-1.68%</InfoItem>
      </InfoRow>

      <Body>
        <Charts>
          <PriceChart />
          <IndicatorBar>
            <IndicatorButton type="button">
              成交额
              <Triangle width={15} height={12} color="#666" />
            </IndicatorButton>
            <IndicatorValue>7133万</IndicatorValue>
          </IndicatorBar>
          <VolumeChart />
          <IndicatorBar>
            <IndicatorButton type="button">
              MACD
              <Triangle width={15} height={12} color="#666" />
            </IndicatorButton>
            <MacdValue $color="#333">DIF:0.002<LongArrow color="#333" /></MacdValue>
            <MacdValue $color="#e8c64c">DEA:0.003<LongArrow color="#e8c64c" /></MacdValue>
            <MacdValue $color="#c03fd0">M:-0.003<LongArrow color="#c03fd0" /></MacdValue>
          </IndicatorBar>
          <MacdChart />
          <TimeAxis>
            <span>09:15</span>
            <span>09:30</span>
            <span>15:00</span>
          </TimeAxis>
          <TimeRange />
        </Charts>

        <Book>
          <BookTabs>
            <BookTab type="button" $active>五档</BookTab>
            <BookTab type="button">大单</BookTab>
            <BookTab type="button">分价</BookTab>
          </BookTabs>
          <BookTable rows={ASKS} />
          <RatioBar>
            <RatioFill style={{ width: '84%' }} />
          </RatioBar>
          <BookTable rows={BIDS} />
          <TicksHeader type="button">
            分时成交
            <Triangle up width={21} height={14} color="#666" />
          </TicksHeader>
          <Table $height={584}>
            <tbody>
              { TICKS.map(([time, price, move, volume, color], idx) => (
                <tr key={idx}>
                  <Cell $color="#666">{time}</Cell>
                  <Cell $align="right" $color={GREEN}>
                    {price}
                    { move !== '' &&
                      <TickArrow><Arrow up={move === 'up'} color={move === 'up' ? RED : GREEN} /></TickArrow>
                    }
                  </Cell>
                  <Cell $align="right" $color={color}>{volume}</Cell>
                </tr>
              ))}
            </tbody>
          </Table>
          <Promo>
            <PromoLink href="#level2">开通L2查看大单</PromoLink>
            <PromoClose type="button" aria-label="关闭"><Close size={22} /></PromoClose>
          </Promo>
        </Book>
      </Body>

      <CommentBar onSubmit={e => e.preventDefault()}>
        <RoundButton type="button" aria-label="弹幕设置"><DanmakuSettings /></RoundButton>
        <CommentField>
          <CommentInput
            aria-label="弹幕"
            placeholder="弹幕走一波..."
            value={comment}
            onChange={e => setComment(e.target.value)}
          />
          <DanmakuButton type="button">
            <DanmakuGlyph>弹<CheckBadge /></DanmakuGlyph>
          </DanmakuButton>
        </CommentField>
      </CommentBar>

      <BottomBar>
        <IndexBlock type="button">
          <IndexValue>
            <Triangle up width={22} height={8} color="#777" />
            3935.43
          </IndexValue>
          <IndexMeta><IndexName>上证</IndexName><span>1.36%</span></IndexMeta>
        </IndexBlock>
        <NavButton type="button"><TradeIcon />交易</NavButton>
        <NavButton type="button"><PostIcon />发帖</NavButton>
        <NavButton type="button"><FunctionIcon />功能</NavButton>
        <NavButton type="button" $accent><AddIcon />加自选</NavButton>
      </BottomBar>
      <HomeArea>
        <HomeIndicator />
      </HomeArea>
    </Page>
  )
}

export default App;
